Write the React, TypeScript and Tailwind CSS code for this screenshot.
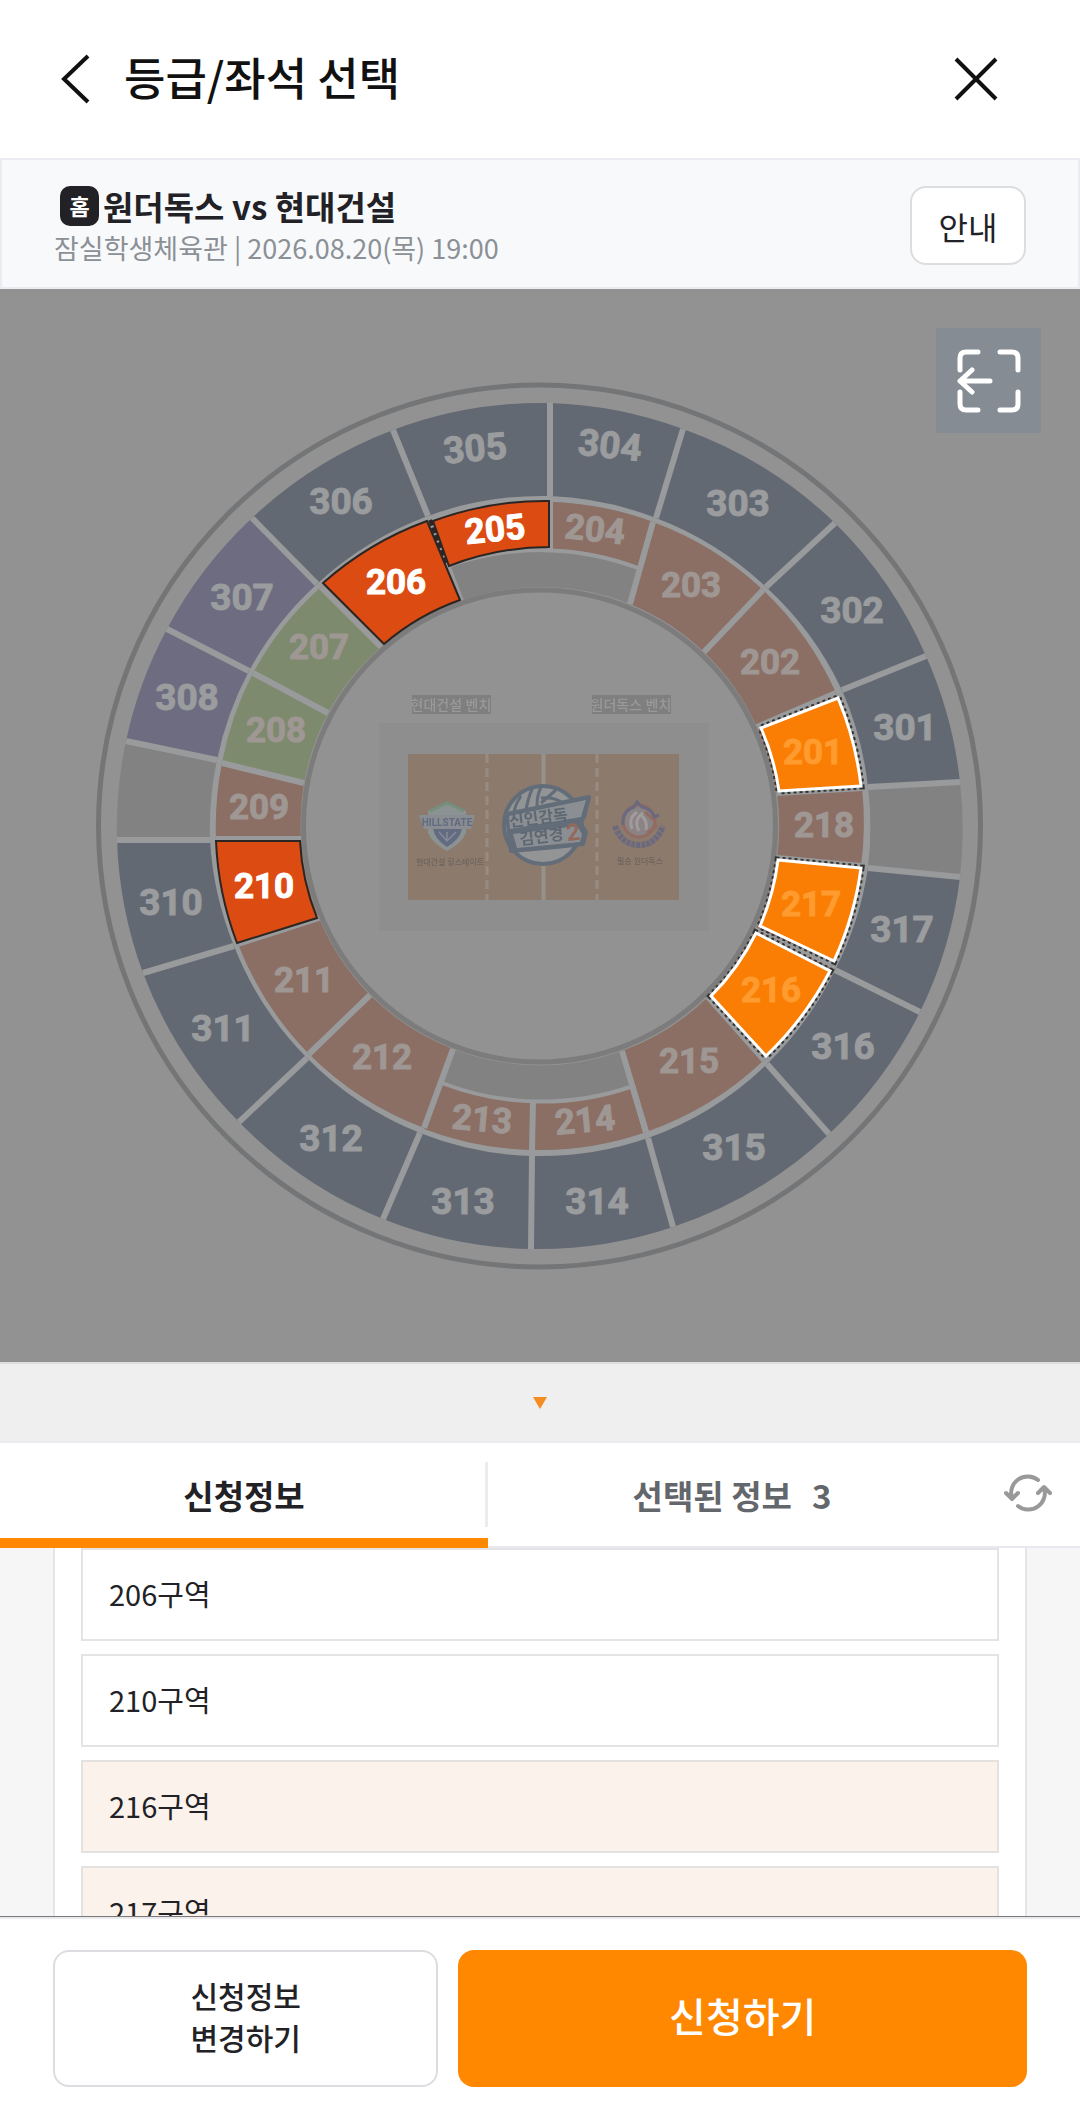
import { useState } from "react";

type Point = [number, number];

type Section = {
  id: string;
  fill: string;
  // start/end boundary, each going from the outer arc to the inner arc
  from: [Point, Point];
  to: [Point, Point];
  label?: Point;
  rotate?: number;
};

const BLUE = "#636973";
const PURPLE = "#6e6c80";
const GREEN = "#7d8a6e";
const SALMON = "#8b6e64";
const GREY = "#828282";
const LINE = "#989a9b";

const UPPER: Section[] = [
  { id: "304", fill: BLUE, from: [[550, 403], [550, 496]], to: [[683, 429], [656, 518]], label: [610, 445], rotate: 6 },
  { id: "303", fill: BLUE, from: [[683, 429], [656, 518]], to: [[835, 523], [766, 587]], label: [738, 503] },
  { id: "302", fill: BLUE, from: [[835, 523], [766, 587]], to: [[926, 656], [842, 690]], label: [852, 610] },
  { id: "301", fill: BLUE, from: [[926, 656], [842, 690]], to: [[960, 782], [868, 787]], label: [905, 727] },
  { id: "e", fill: GREY, from: [[960, 782], [868, 787]], to: [[960, 877], [868, 868]] },
  { id: "317", fill: BLUE, from: [[960, 877], [868, 868]], to: [[920, 1012], [835, 970]], label: [902, 929] },
  { id: "316", fill: BLUE, from: [[920, 1012], [835, 970]], to: [[829, 1134], [767, 1064]], label: [843, 1046] },
  { id: "315", fill: BLUE, from: [[829, 1134], [767, 1064]], to: [[673, 1227], [648, 1138]], label: [734, 1147] },
  { id: "314", fill: BLUE, from: [[673, 1227], [648, 1138]], to: [[531, 1249], [532, 1156]], label: [597, 1201] },
  { id: "313", fill: BLUE, from: [[531, 1249], [532, 1156]], to: [[383, 1219], [420, 1133]], label: [463, 1201] },
  { id: "312", fill: BLUE, from: [[383, 1219], [420, 1133]], to: [[239, 1122], [307, 1058]], label: [331, 1138] },
  { id: "311", fill: BLUE, from: [[239, 1122], [307, 1058]], to: [[143, 973], [234, 946]], label: [223, 1028] },
  { id: "310", fill: BLUE, from: [[143, 973], [234, 946]], to: [[117, 840], [210, 840]], label: [171, 902] },
  { id: "w", fill: GREY, from: [[117, 840], [210, 840]], to: [[126, 741], [217, 760]] },
  { id: "308", fill: PURPLE, from: [[126, 741], [217, 760]], to: [[167, 629], [249, 671]], label: [187, 697] },
  { id: "307", fill: PURPLE, from: [[167, 629], [249, 671]], to: [[252, 518], [317, 584]], label: [242, 597] },
  { id: "306", fill: BLUE, from: [[252, 518], [317, 584]], to: [[393, 430], [428, 516]], label: [341, 501] },
  { id: "305", fill: BLUE, from: [[393, 430], [428, 516]], to: [[550, 403], [550, 496]], label: [475, 448], rotate: -5 },
];

const LOWER: Section[] = [
  { id: "n", fill: GREY, from: [[430, 521], [461, 601]], to: [[653, 522], [630, 604]] },
  { id: "203", fill: SALMON, from: [[653, 522], [630, 604]], to: [[763, 590], [704, 652]], label: [691, 585] },
  { id: "202", fill: SALMON, from: [[763, 590], [704, 652]], to: [[836, 693], [757, 727]], label: [770, 662] },
  { id: "201", fill: SALMON, from: [[836, 693], [757, 727]], to: [[862, 788], [777, 793]] },
  { id: "218", fill: SALMON, from: [[862, 788], [777, 793]], to: [[861, 866], [777, 858]], label: [824, 825] },
  { id: "217", fill: SALMON, from: [[861, 866], [777, 858]], to: [[832, 965], [755, 930]] },
  { id: "216", fill: SALMON, from: [[832, 965], [755, 930]], to: [[764, 1060], [708, 997]] },
  { id: "215", fill: SALMON, from: [[764, 1060], [708, 997]], to: [[646, 1132], [622, 1051]], label: [689, 1061] },
  { id: "s", fill: GREY, from: [[646, 1132], [622, 1051]], to: [[424, 1128], [453, 1049]] },
  { id: "212", fill: SALMON, from: [[424, 1128], [453, 1049]], to: [[309, 1054], [370, 995]], label: [382, 1057] },
  { id: "211", fill: SALMON, from: [[309, 1054], [370, 995]], to: [[238, 944], [319, 918]], label: [304, 980] },
  { id: "210", fill: SALMON, from: [[238, 944], [319, 918]], to: [[216, 839], [301, 839]] },
  { id: "209", fill: SALMON, from: [[216, 839], [301, 839]], to: [[222, 763], [304, 783]], label: [259, 807] },
  { id: "208", fill: GREEN, from: [[222, 763], [304, 783]], to: [[253, 673], [328, 713]], label: [276, 730] },
  { id: "207", fill: GREEN, from: [[253, 673], [328, 713]], to: [[321, 587], [381, 647]], label: [319, 647] },
  { id: "206", fill: SALMON, from: [[321, 587], [381, 647]], to: [[430, 521], [461, 601]] },
];

// sections that only take the outer half of the lower ring
const SHORT: Section[] = [
  { id: "204", fill: SALMON, from: [[550, 502], [550, 549]], to: [[653, 522], [639, 566]], label: [595, 529], rotate: 6 },
  { id: "214", fill: SALMON, from: [[646, 1132], [632, 1085]], to: [[532, 1150], [533, 1100]], label: [585, 1120], rotate: -5 },
  { id: "213", fill: SALMON, from: [[532, 1150], [533, 1100]], to: [[424, 1129], [442, 1082]], label: [482, 1119], rotate: 5 },
];

const OPEN: Section[] = [
  { id: "206", fill: "#dc4b11", from: [[323, 583], [384, 644]], to: [[427, 521], [460, 600]], label: [396, 582] },
  { id: "210", fill: "#dc4b11", from: [[237, 943], [317, 918]], to: [[216, 841], [300, 841]], label: [264, 886] },
];

const OPEN_SHORT: Section[] = [
  { id: "205", fill: "#dc4b11", from: [[433, 521], [449, 566]], to: [[549, 501], [549, 547]], label: [495, 529], rotate: -6 },
];

const PICKED: Section[] = [
  { id: "201", fill: "#fa7e03", from: [[838, 698], [761, 728]], to: [[861, 786], [779, 791]], label: [813, 752] },
  { id: "217", fill: "#fa7e03", from: [[861, 868], [778, 860]], to: [[834, 961], [760, 926]], label: [811, 904] },
  { id: "216", fill: "#fa7e03", from: [[830, 971], [756, 933]], to: [[766, 1056], [711, 996]], label: [771, 990] },
];

const ZONES = [
  { name: "206구역", picked: false },
  { name: "210구역", picked: false },
  { name: "216구역", picked: true },
  { name: "217구역", picked: true },
];

function ringPath(s: Section, outer: number, inner: number) {
  const [a, b] = s.from;
  const [c, d] = s.to;
  return `M${a} A${outer} ${outer} 0 0 1 ${c} L${d} A${inner} ${inner} 0 0 0 ${b} Z`;
}

function SectionLabel({ s, size, fill }: { s: Section; size: number; fill: string }) {
  if (!s.label) return null;
  const [x, y] = s.label;
  return (
    <text
      x={x}
      y={y}
      dy="0.35em"
      textAnchor="middle"
      fontSize={size}
      fontWeight={700}
      fill={fill}
      stroke={fill}
      strokeWidth={1}
      transform={s.rotate ? `rotate(${s.rotate} ${x} ${y})` : undefined}
    >
      {s.id}
    </text>
  );
}

function Court() {
  return (
    <g className="blur-[0.7px]">
      <rect x="379" y="723" width="330" height="208" fill="#8e8e8e" />
      <rect x="408" y="754" width="271" height="146" fill="#8c7a6d" />
      <path d="M487 754V900M597 754V900" stroke="#968c84" strokeWidth="3" strokeDasharray="9 5" />
      <path d="M543.500 754V900" stroke="#96918b" strokeWidth="4" />

      <rect x="412" y="695" width="79" height="19" fill="#7f7f7f" />
      <rect x="592" y="695" width="79" height="19" fill="#7f7f7f" />
      <g fontSize="14" fontWeight="500" fill="#999999" textAnchor="middle">
        <text x="451" y="710">현대건설 벤치</text>
        <text x="631" y="710">원더독스 벤치</text>
      </g>
      <g fontSize="8" fontWeight="500" fill="#6e645c" textAnchor="middle">
        <text x="450" y="865">현대건설 힐스테이트</text>
        <text x="640" y="864">필승 원더독스</text>
      </g>

      {/* home team shield */}
      <g>
        <path d="M428 811 446 802 466 811V833Q462 843 447 851 432 843 428 833Z" fill="#8b9293" />
        <path d="M430 811 447 803 464 811" fill="none" stroke="#74907a" strokeWidth="3" />
        <path d="M433 829H462Q460 839 447 847 435 839 433 829Z" fill="#626b80" />
        <path d="M439 832 447 841 456 832M447 832V841" fill="none" stroke="#858b98" strokeWidth="1.500" />
        <path d="M419 815H475L471 829H424Z" fill="#898d92" />
        <text x="447" y="826" fontSize="10" fontWeight="700" fill="#626b80" textAnchor="middle">
          HILLSTATE
        </text>
      </g>

      {/* centre emblem */}
      <g>
        <circle cx="543" cy="825" r="39" fill="#939495" stroke="#626d79" strokeWidth="4" />
        <path
          d="M521 796Q514 806 513 818M533 787Q527 800 526 812M541 787Q535 800 538 812M541 798Q556 796 567 806M556 790 541 803"
          fill="none"
          stroke="#626d79"
          strokeWidth="3"
        />
        <path d="M507 814 589 797 584 817 580 823 586 832 583 844 556 847 511 851Z" fill="#626d79" stroke="#626d79" strokeWidth="4" strokeLinejoin="round" />
        <path d="M509 816 586 800 581 817 510 829ZM513 834 577 826 582 834 580 842 517 848Z" fill="#8b8f93" />
        <g fontWeight="700" fill="#5d6873" transform="rotate(-7 543 825)">
          <text x="510" y="823" fontSize="16">신인감독</text>
          <text x="518" y="842" fontSize="16">김연경</text>
          <text x="565" y="844" fontSize="24" fill="#94695b">2</text>
        </g>
      </g>

      {/* away team mark */}
      <g fill="none">
        <path d="M615 826Q622 845 639 845 656 845 663 826" stroke="#6b697e" strokeWidth="6" strokeDasharray="4 1" />
        <circle cx="639" cy="821" r="16" fill="#8b8284" stroke="#936b62" strokeWidth="3" />
        <path d="M623 825Q622 811 634 807L637 802 642 807Q652 809 654 817L659 815" stroke="#6b697e" strokeWidth="3" />
        <path d="M632 829Q628 818 637 812M639 831Q633 820 643 813M646 830Q648 821 641 815" stroke="#a09b9d" strokeWidth="3" />
        <path d="M645 812 655 821M647 833 657 825" stroke="#936b62" strokeWidth="3" />
      </g>
    </g>
  );
}

function SeatMap() {
  return (
    <svg
      viewBox="0 289 1080 1073"
      className="block w-full font-['Liberation_Sans_Narrow','Roboto','Noto_Sans_CJK_KR',sans-serif]"
      role="img"
      aria-label="좌석 배치도"
    >
      <circle cx="539.500" cy="826" r="441" fill="none" stroke="#747577" strokeWidth="5" />
      <circle cx="539.500" cy="826" r="327" fill="none" stroke={LINE} strokeWidth="8" />
      <circle cx="539.500" cy="826" r="236" fill="none" stroke="#7c7c7c" strokeWidth="5" />

      {UPPER.map((s) => (
        <path key={s.id} d={ringPath(s, 423, 330)} fill={s.fill} />
      ))}
      {LOWER.map((s) => (
        <path key={s.id} d={ringPath(s, 324, 239)} fill={s.fill} />
      ))}
      {SHORT.map((s) => (
        <path key={s.id} d={ringPath(s, 324, 277)} fill={s.fill} />
      ))}
      <path d="M448 566A276 276 0 0 1 638 568M442 1083A276 276 0 0 0 633 1086" fill="none" stroke={LINE} strokeWidth="4" />
      {[...UPPER, ...LOWER, ...SHORT].map((s) => (
        <path key={s.id} d={`M${s.from[0]} L${s.from[1]}`} stroke={LINE} strokeWidth="6" />
      ))}

      {UPPER.map((s) => (
        <SectionLabel key={s.id} s={s} size={37} fill="#9a9c9e" />
      ))}
      {[...LOWER, ...SHORT].map((s) => (
        <SectionLabel key={s.id} s={s} size={35} fill="#9f9793" />
      ))}

      {OPEN.map((s) => (
        <path key={s.id} d={ringPath(s, 324, 239)} fill={s.fill} stroke="#2b2624" strokeWidth="2" />
      ))}
      {OPEN_SHORT.map((s) => (
        <path key={s.id} d={ringPath(s, 324, 278)} fill={s.fill} stroke="#2b2624" strokeWidth="2" />
      ))}
      <path d="M430 520 447 565" stroke="#2b2624" strokeWidth="4" strokeDasharray="6 2" />
      {[...OPEN, ...OPEN_SHORT].map((s) => (
        <SectionLabel key={s.id} s={s} size={35} fill="#ffffff" />
      ))}

      {PICKED.map((s) => (
        <g key={s.id}>
          <path d={ringPath(s, 324, 239)} fill="none" stroke="#333333" strokeWidth="7" strokeDasharray="3 3" />
          <path d={ringPath(s, 324, 239)} fill={s.fill} stroke="#ffffff" strokeWidth="3" />
          <SectionLabel s={s} size={35} fill="#ff9b2f" />
        </g>
      ))}

      <Court />
    </svg>
  );
}

function RefreshIcon() {
  return (
    <svg viewBox="0 0 48 38" className="h-[38px] w-12" fill="none" stroke="#999999" strokeWidth="4" strokeLinecap="round" strokeLinejoin="round">
      <path d="M34 6A16.500 16.500 0 0 0 8 24M2 19 8 25 14 19" />
      <path d="M14 32A16.500 16.500 0 0 0 40 14M34 19 40 13 46 19" />
    </svg>
  );
}

export default function App() {
  const [tab, setTab] = useState<"apply" | "selected">("apply");

  return (
    <div className="flex h-screen flex-col bg-white font-['Noto_Sans_CJK_KR',sans-serif] text-[#222226]">
      <header className="flex h-[158px] shrink-0 items-center justify-between pr-[82px] pl-14">
        <div className="flex items-center gap-7">
          <button type="button" aria-label="뒤로">
            <svg viewBox="0 0 40 52" className="h-[52px] w-10" fill="none" stroke="#111111" strokeWidth="4">
              <path d="M32 3 8 26 32 49" />
            </svg>
          </button>
          <h1 className="pb-1 text-[45px] leading-[60px] font-medium text-[#111111]">등급/좌석 선택</h1>
        </div>
        <button type="button" aria-label="닫기">
          <svg viewBox="0 0 44 44" className="size-11" fill="none" stroke="#111111" strokeWidth="4">
            <path d="M2 2 42 42M42 2 2 42" />
          </svg>
        </button>
      </header>

      <section className="flex h-[131px] shrink-0 items-center justify-between border-2 border-[#ebecf1] bg-[#f8f9fb] px-[52px] pt-1">
        <div>
          <div className="flex items-center gap-1 pl-1.5">
            <span className="flex h-10 w-[39px] items-center justify-center rounded-[10px] bg-[#222226] text-[22px] font-bold text-white">
              홈
            </span>
            <h2 className="text-[33px] leading-[44px] font-bold">원더독스 vs 현대건설</h2>
          </div>
          <p className="text-[27px] leading-[40px] text-[#8b9096]">잠실학생체육관 | 2026.08.20(목) 19:00</p>
        </div>
        <button type="button" className="h-[79px] w-[116px] rounded-2xl border-2 border-[#dcdddf] bg-white text-[32px]">
          안내
        </button>
      </section>

      <section className="relative shrink-0 bg-[#929292]">
        <SeatMap />
        <button
          type="button"
          aria-label="전체 보기"
          className="absolute top-[39px] right-[39px] flex size-[105px] items-center justify-center bg-[#858c94]"
        >
          <svg viewBox="0 0 64 64" className="size-16" fill="none" stroke="#ffffff" strokeWidth="5" strokeLinecap="round" strokeLinejoin="round">
            <path d="M3 21V9Q3 3 9 3H21M43 3H55Q61 3 61 9V21M61 43V55Q61 61 55 61H43M21 61H9Q3 61 3 55V43" />
            <path d="M33 32H3M15 21 3 32 15 43" />
          </svg>
        </button>
      </section>

      <button
        type="button"
        aria-label="접기"
        className="flex h-[81px] shrink-0 items-center justify-center border-t-2 border-b-2 border-t-[#dedede] border-b-[#ebebef] bg-[#efefef]"
      >
        <svg viewBox="0 0 14 12" className="h-3 w-3.5">
          <path d="M0 0H14L7 12Z" fill="#f68b1f" />
        </svg>
      </button>

      <div className="flex h-[105px] shrink-0 border-b-2 border-[#e8e8ee]">
        <div role="tablist" className="flex flex-1">
          <button
            type="button"
            role="tab"
            aria-selected={tab === "apply"}
            onClick={() => setTab("apply")}
            className="relative flex-1 pt-0.5 text-[33px] font-bold"
          >
            신청정보
            <span className="absolute top-[19px] right-0 h-[65px] w-[3px] bg-[#ebecf0]" />
            {tab === "apply" && <span className="absolute inset-x-0 -bottom-0.5 h-2.5 bg-[#ff8800]" />}
          </button>
          <button
            type="button"
            role="tab"
            aria-selected={tab === "selected"}
            onClick={() => setTab("selected")}
            className="relative flex flex-1 items-center justify-center gap-5 pt-0.5 text-[33px] font-bold text-[#63676c]"
          >
            <span>선택된 정보</span>
            <span>3</span>
            {tab === "selected" && <span className="absolute inset-x-0 -bottom-0.5 h-2.5 bg-[#ff8800]" />}
          </button>
        </div>
        <button type="button" aria-label="새로고침" className="flex w-[104px] items-center justify-center pb-1">
          <RefreshIcon />
        </button>
      </div>

      <main className="min-h-0 flex-1 overflow-y-auto bg-[#f6f6f6] px-[53px] [scrollbar-width:none]">
        <ul className="flex flex-col gap-[13px] border-x-2 border-[#e5e5e7] bg-white px-[26px]">
          {ZONES.map((z) => (
            <li key={z.name}>
              <button
                type="button"
                className={
                  z.picked
                    ? "h-[93px] w-full border-2 border-[#e4e2e1] bg-[#fbf2ec] px-[26px] pb-0.5 text-left text-[29px]"
                    : "h-[93px] w-full border-2 border-[#e4e4e4] bg-white px-[26px] pb-0.5 text-left text-[29px]"
                }
              >
                {z.name}
              </button>
            </li>
          ))}
        </ul>
      </main>

      <footer className="shrink-0 border-t border-[#77777c] bg-white">
        <div className="flex gap-5 border-t-2 border-[#ebebee] px-[53px] pt-[31px] pb-[31px]">
          <button
            type="button"
            className="h-[137px] flex-[383] rounded-2xl border-2 border-[#dcdde1] pb-1.5 text-[30px] leading-[42px] font-medium"
          >
            신청정보
            <br />
            변경하기
          </button>
          <button type="button" className="h-[137px] flex-[571] rounded-2xl bg-[#ff8800] pb-2 text-[40px] font-medium text-white">
            신청하기
          </button>
        </div>
      </footer>
    </div>
  );
}
